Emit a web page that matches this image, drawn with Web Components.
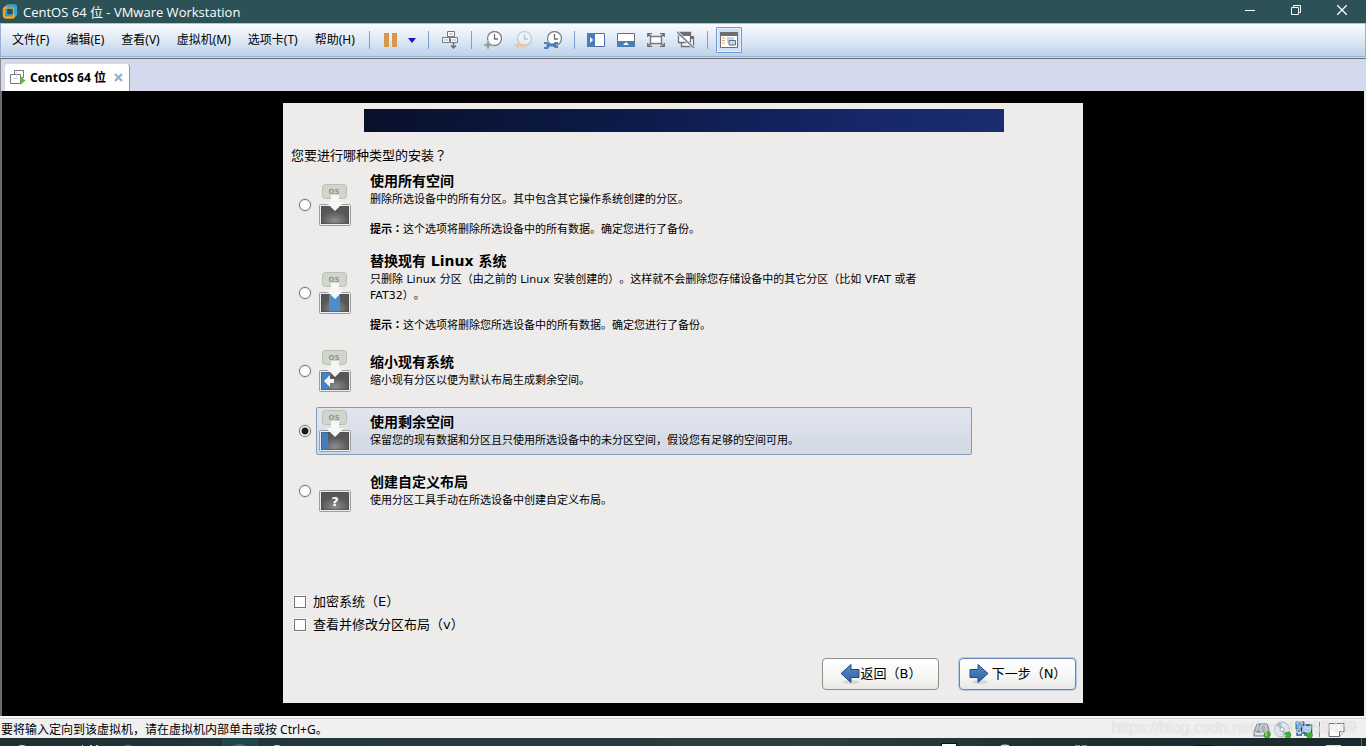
<!DOCTYPE html>
<html lang="zh-CN">
<head>
<meta charset="utf-8">
<title>CentOS 64 位 - VMware Workstation</title>
<style>
html, body { margin: 0; }
body { background: #000; font-family: "Noto Sans", "Noto Sans CJK SC", sans-serif; text-spacing-trim: space-all; }
</style>
</head>
<body>
<vm-workstation></vm-workstation>

<script>
const define = (name, css, html, setup) => {
  const tpl = document.createElement('template');
  tpl.innerHTML = `<style>*{box-sizing:border-box}${css}</style>${html}`;
  customElements.define(name, class extends HTMLElement {
    constructor() {
      super();
      this.attachShadow({ mode: 'open' }).append(tpl.content.cloneNode(true));
    }
    connectedCallback() { if (setup) setup(this, this.shadowRoot); }
  });
};

/* ---------- toolbar glyphs, all on an 18px grid ---------- */
const clock = '<circle cx="10.500" cy="7.500" r="7" fill="#fff" stroke="#808285" stroke-width="1.300"/><path d="M10.500 3V8H14" fill="none" stroke="#6d6e71" stroke-width="1.300"/>';
const GLYPHS = {
  pause: '<path d="M2 2h5v14H2zM10 2h5v14h-5z" fill="#d8954c"/>',
  send: '<g fill="#fff" stroke="#77787b"><path d="M6.500 .5h7v5h-7zM1.500 6.500h7v5h-7zM9.500 6.500h7v5h-7z"/></g><path d="M8 2h4v2H8zM3 8h4v2H3zM11 8h4v2h-4z" fill="#c8d6ea"/><path d="M12.500 12v5M10 14.500l2.500 2.500 2.500-2.500" fill="none" stroke="#6d6e71" stroke-width="1.500"/>',
  snap: clock + '<path d="M2.500 10h3v2.500H8v3H5.500V18h-3v-2.500H0v-3h2.500z" fill="#84a896" stroke="#e6edf6" stroke-width=".6"/>',
  revert: '<g opacity=".3">' + clock + '</g><path d="M5 11v2h8v3H5v2l-5-3.500z" fill="#e0c9b8"/>',
  manage: clock + '<path d="M0 11h3l2 1.500h4l2-1.500h3v2h-2v2h2v2h-3l-2-1.500H5.500L4 18H0v-2h2.500v-3H0z" fill="#4a7ebb"/>',
  side: '<path d="M.5 2.500h17v13H.5z" fill="#fff" stroke="#4a6f9f"/><path d="M0 2h8v14H0z" fill="#4a7ebb"/><path d="M3 6l3 3-3 3z" fill="#fff"/>',
  bottom: '<path d="M.5 2.500h17v13H.5z" fill="#fff" stroke="#6d6e71"/><path d="M0 10h18v6H0z" fill="#4a7ebb"/><path d="M6 14l3-3 3 3z" fill="#fff"/>',
  full: '<path d="M3.500 5.500h11v7h-11z" fill="#fff" stroke="#77787b" stroke-width="1.400"/><path d="M.7 6V2.700H5M.7 2.700L4 5.500M13 2.700h4.300V6M17.300 2.700L14 5.500M.7 12v3.300H5M.7 15.300L4 12.500M13 15.300h4.300V12M17.300 15.300L14 12.500" fill="none" stroke="#6d6e71" stroke-width="1.200"/>',
  unity: '<path d="M4.500 6.500h12v9h-12z" fill="#fff" stroke="#6d6e71" stroke-width="1.300"/><path d="M13 5h4v3h-4z" fill="#6d6e71"/><path d="M1.500 1.500h12v10h-12z" fill="#fff" stroke="#6d6e71" stroke-width="1.300"/><path d="M1 1h13v4H1z" fill="#6d6e71"/><path d="M0 1l17 16" stroke="#e9f0f8" stroke-width="3"/><path d="M0 1l17 16" stroke="#6d7a8c" stroke-width="1.300"/>',
  console: '<path d="M.5 1.500h17v15H.5z" fill="#fff" stroke="#6d6e71"/><path d="M0 1h18v4H0z" fill="#6d6e71"/><path d="M2 7h3M2 9.500h3M2 12h3" stroke="#e5a868"/><path d="M7 6h7v6H7z" fill="#c8d6ea"/><path d="M9 9.500h6.500V14H9z" fill="#c8d6ea" stroke="#5f7186"/>',
  machine: '<path d="M4.500 1.500h9v7h-9z" fill="#fff" stroke="#77787b"/><path d="M.5 5.500h10v9H.5z" fill="#fff" stroke="#77787b"/><path d="M6.500 3v5M3 9.500h5" stroke="#c8d6ea"/><path d="M10.500 7l5 4.500-5 4.500z" fill="#5fbf3f"/>',
  logo: '<rect x="4" y="1.500" width="10" height="10" rx="2" fill="none" stroke="#35a5cc" stroke-width="2.400"/><rect x="2" y="3.500" width="10" height="10" rx="2" fill="none" stroke="#f0a52c" stroke-width="2.400"/><path d="M5 2.500h8v8" fill="none" stroke="#35a5cc" stroke-width="2"/>',
  disk: '<path d="M4 3h10l3 8H1z" fill="#aab4bd" stroke="#6f7b85"/><path d="M1 11h16v4H1z" fill="#dde2e6" stroke="#6f7b85"/><circle cx="14" cy="14" r="3" fill="#3cb72c" stroke="#2b8a20" stroke-width=".6"/>',
  cd: '<circle cx="8" cy="8.500" r="7.500" fill="#dfe8ed" stroke="#a9b3bb"/><path d="M8 8.500L2 4a7 7 0 0 1 5-3zM8 8.500l6 4a7 7 0 0 1-5 3z" fill="#a6c0d1"/><circle cx="8" cy="8.500" r="2" fill="#fff" stroke="#9aa6b0"/><circle cx="14" cy="14" r="3" fill="#3cb72c" stroke="#2b8a20" stroke-width=".6"/>',
  net: '<path d="M1 1h8v7H1z" fill="#7fb1df" stroke="#2a5f9e"/><path d="M6.500 4h10v8h-10z" fill="#9fd0f5" stroke="#16457e" stroke-width="1.400"/><path d="M2 9v5h5M4 9v3M9 14h5" fill="none" stroke="#1f5ca0" stroke-width="1.500"/><circle cx="14.500" cy="14" r="3" fill="#3cb72c" stroke="#2b8a20" stroke-width=".6"/>',
  note: '<path d="M1 2.500h15v8l-4.500 5H1z" fill="#fff" stroke="#6d6e71"/><path d="M11.500 15.500v-5H16" fill="#eee" stroke="#6d6e71"/>'
};
define('vm-glyph', ':host{display:block;width:18px;height:18px;flex:none}svg{display:block}',
  '<svg width="18" height="18" viewBox="0 0 18 18" aria-hidden="true"></svg>',
  (el, root) => { root.querySelector('svg').innerHTML = GLYPHS[el.getAttribute('name')] || ''; });

/* ---------- window title bar ---------- */
define('title-bar', `
:host{display:flex;align-items:center;height:23px;flex:none;background:#2c5157;color:#fff;font:13px/18px "Open Sans","Noto Sans CJK SC",sans-serif;padding:0 1px 0 2px}
vm-glyph{margin-right:3px;margin-top:2px}
h1{margin:0;font:inherit;flex:1}
button{width:46px;height:20px;align-self:flex-start;padding:0;border:0;background:none;display:grid;place-items:center}
svg{display:block;fill:none;stroke:#fff}`, `
<vm-glyph name="logo"></vm-glyph><h1>CentOS 64 位 - VMware Workstation</h1>
<button aria-label="最小化"><svg width="10" height="10"><path d="M0 5.500h10"/></svg></button>
<button aria-label="还原"><svg width="10" height="10"><path d="M.5 2.500h7v7h-7zM2.500 2V.5h7v7H8"/></svg></button>
<button aria-label="关闭"><svg width="10" height="10"><path d="M0 0l10 10M10 0L0 10" stroke-width="1.300"/></svg></button>`);

/* ---------- menus and tools ---------- */
define('menu-bar', `
:host{display:flex;align-items:center;height:34px;flex:none;border:1px solid #93b4d8;border-top-color:#a9c6de;background:linear-gradient(#f9fbfe,#dfe9f5 50%,#bdd1e8);font-size:12px;color:#000}
nav{display:flex;gap:17px;padding-left:11px;width:368px;flex:none}
button{font:inherit;color:inherit;line-height:18px;border:0;background:none;padding:0;white-space:nowrap}
.tools{display:flex;align-items:center;gap:12px}
.sep{width:1px;height:18px;background:#7ba0cf}
.power{display:flex;align-items:center;gap:8px}
.on{border:1px solid #6f9bd1;background:#cfe0f7;box-shadow:inset 0 0 0 1px #e6effb;padding:3px;margin:0 -4px;border-radius:1px}`, `
<nav><button>文件(F)</button><button>编辑(E)</button><button>查看(V)</button><button>虚拟机(M)</button><button>选项卡(T)</button><button>帮助(H)</button></nav>
<div class="tools">
<i class="sep"></i><div class="power"><button aria-label="挂起"><vm-glyph name="pause"></vm-glyph></button><button aria-label="电源选项"><svg width="8" height="5" style="display:block"><path d="M0 0h8L4 5z" fill="#1414c8"/></svg></button></div>
<i class="sep"></i><button aria-label="发送按键"><vm-glyph name="send"></vm-glyph></button>
<i class="sep"></i><button aria-label="拍摄快照"><vm-glyph name="snap"></vm-glyph></button><button aria-label="恢复快照"><vm-glyph name="revert"></vm-glyph></button><button aria-label="管理快照"><vm-glyph name="manage"></vm-glyph></button>
<i class="sep"></i><button aria-label="显示库"><vm-glyph name="side"></vm-glyph></button><button aria-label="缩略图栏"><vm-glyph name="bottom"></vm-glyph></button><button aria-label="全屏"><vm-glyph name="full"></vm-glyph></button><button aria-label="Unity"><vm-glyph name="unity"></vm-glyph></button>
<i class="sep"></i><button class="on" aria-label="控制台视图"><vm-glyph name="console"></vm-glyph></button>
</div>`);

/* ---------- tabs ---------- */
define('tab-strip', `
:host{display:flex;align-items:flex-end;height:34px;flex:none;background:#d4d9ed;border-top:1px solid #d9dbe2;box-shadow:inset 0 1px #6b6b6b;padding-left:4px;border-left:1px solid #8c8c8c}
.tab{display:flex;align-items:center;height:27px;background:#fff;border-right:1px solid #7f9db9;border-radius:3px 3px 0 0;padding:0 6px 0 5px;font-size:12px;font-weight:bold;line-height:16px}
vm-glyph{margin:1px 2px 0 0}
.tab span{white-space:nowrap}
button{border:0;background:none;padding:0;margin-left:8px}
svg{display:block}`, `
<div class="tab"><vm-glyph name="machine"></vm-glyph><span>CentOS 64 位</span><button aria-label="关闭选项卡"><svg width="9" height="9"><path d="M1 1l7 7M8 1L1 8" stroke="#8fb0cf" stroke-width="2.200"/></svg></button></div>`);

/* ---------- partition pictures ---------- */
const osPart = '<rect x="4.500" y="1.500" width="24" height="14" rx="3" fill="#d1d6cd" stroke="#b9beb5"/><text x="16" y="11" text-anchor="middle" font-family="DejaVu Sans" font-weight="bold" font-size="7" fill="#92978f">OS</text>';
const arrow = '<path d="M13 12h8v7h5l-9 9-9-9h5z" fill="#f6f6f5"/>';
const PARTS = {
  all: [osPart, '', arrow],
  replace: [osPart, '<path d="M11 23h11v18H11z" fill="#4f8ccb"/>', arrow],
  shrink: [osPart, '<path d="M3 23h9v18H3z" fill="#4583c6"/>', arrow + '<path d="M6 32l6-6v4h4v4h-4v4z" fill="#f6f6f5"/>'],
  free: [osPart, '<path d="M3 23h7v18H3z" fill="#3f7fc4"/>', arrow],
  custom: ['', '', '<text x="17" y="37" text-anchor="middle" font-family="DejaVu Sans" font-weight="bold" font-size="13" fill="#fff">?</text>']
};
define('partition-icon', ':host{display:block;width:34px;height:44px;flex:none}svg{display:block}',
  '<svg width="34" height="44" viewBox="0 0 34 44" aria-hidden="true"></svg>',
  (el, root) => {
    const [top, part, over] = PARTS[el.getAttribute('kind')];
    root.querySelector('svg').innerHTML = `<defs><radialGradient id="g" cy=".8"><stop offset="0" stop-color="#8d8d8d"/><stop offset="1" stop-color="#575757"/></radialGradient></defs>${top}<rect x="1.500" y="21.500" width="31" height="21" rx="1" fill="#eee" stroke="#9d9d9d"/><path d="M3 23h28v18H3z" fill="url(#g)"/>${part}<path d="M3.500 23.500h27v17h-27z" fill="none" stroke="#444" stroke-opacity=".4"/>${over}`;
  });

/* ---------- wizard buttons ---------- */
define('wizard-button', `
:host{display:block}
button{display:flex;align-items:center;justify-content:center;gap:1px;min-width:117px;height:32px;padding:0 8px;border:1px solid #8f8f8c;border-radius:4px;background:linear-gradient(#fff,#f8f8f7 50%,#e9e8e6);font:13px/18px "DejaVu Sans","Noto Sans CJK SC",sans-serif;color:#000;white-space:nowrap}
:host([primary]) button{border-color:#6688b8;box-shadow:0 0 0 1px #b7cae4;gap:3px}
:host([primary]) svg path{transform:scaleX(-1);transform-origin:10px 10px}
svg{display:block;flex:none}`, `
<button><svg width="20" height="22"><defs><linearGradient id="b" x2="0" y2="1"><stop stop-color="#5b8ac4"/><stop offset="1" stop-color="#2f62a6"/></linearGradient></defs><ellipse cx="11" cy="19" rx="8" ry="2" fill="#000" opacity=".1"/><path d="M1 10.500l10-9v5h8v8h-8v5z" fill="url(#b)" stroke="#204a87"/></svg><slot></slot></button>`);

/* ---------- guest installer ---------- */
const options = [
  ['all', '使用所有空间', '删除所选设备中的所有分区。其中包含其它操作系统创建的分区。', '这个选项将删除所选设备中的所有数据。确定您进行了备份。'],
  ['replace', '替换现有 Linux 系统', '只删除 Linux 分区（由之前的 Linux 安装创建的）。这样就不会删除您存储设备中的其它分区（比如 VFAT 或者 FAT32）。', '这个选项将删除您所选设备中的所有数据。确定您进行了备份。'],
  ['shrink', '缩小现有系统', '缩小现有分区以便为默认布局生成剩余空间。'],
  ['free', '使用剩余空间', '保留您的现有数据和分区且只使用所选设备中的未分区空间，假设您有足够的空间可用。'],
  ['custom', '创建自定义布局', '使用分区工具手动在所选设备中创建自定义布局。']
];
define('centos-installer', `
:host{display:flex;flex-direction:column;width:100%;max-width:800px;background:#edeceb;color:#000;font:13px/18px "DejaVu Sans","Noto Sans CJK SC",sans-serif;padding:6px 7px 13px 8px}
.banner{width:100%;max-width:640px;height:23px;flex:none;align-self:center;background:linear-gradient(100deg,#08112b,#0c1a48 40%,#17276a 80%,#1a2d6e)}
h2{font:inherit;margin:15px 0 6px}
.mid{font-family:"DejaVu Sans","Noto Sans CJK TC",sans-serif}
form{display:flex;flex-direction:column;flex:1}
.list{display:flex;flex-direction:column;gap:12px;max-width:681px}
.option{display:grid;grid-template-columns:25px 1fr;align-items:center}
.box{display:flex;align-items:center;gap:18px;min-height:48px;padding:0 1px;border:1px solid transparent;border-radius:2px}
.text{display:block;max-width:556px;font-size:11px;line-height:16px}
.text strong{display:block;font-size:14px;line-height:18px;margin-bottom:2px}
.text > span{display:block}
.text .hint{margin-top:14px}
.option:has(:checked) .box{border-color:#849bbb;background:linear-gradient(#e1e5ee,#d2d9e3)}
input{appearance:none;margin:0;background:#fff;border:1px solid #767673;display:block;flex:none}
[type=radio]{width:12px;height:12px;border-radius:50%;margin-left:8px;box-shadow:0 0 0 1px #dddcda}
[type=radio]:checked{background:radial-gradient(circle,#1a1a1a 3px,#fff 4px)}
[type=checkbox]{width:12px;height:12px;box-shadow:0 0 0 1px #f6f6f5}
[type=checkbox]:checked{background:#444}
.checks{display:flex;flex-direction:column;gap:5px;margin:auto 0 24px 3px}
.checks label{display:flex;align-items:center;gap:7px}
.actions{display:flex;justify-content:flex-end;gap:20px}`, `
<div class="banner"></div>
<h2>您要进行哪种类型的安装<span class="mid" lang="zh-TW">？</span></h2>
<form>
<div class="list">${options.map(([kind, title, text, hint]) => `
<label class="option"><input type="radio" name="layout" value="${kind}"${kind === 'free' ? ' checked' : ''}><span class="box"><partition-icon kind="${kind}"></partition-icon><span class="text"><strong>${title}</strong><span>${text}</span>${hint ? `<span class="hint"><b class="mid" lang="zh-TW">提示：</b>${hint}</span>` : ''}</span></span></label>`).join('')}
</div>
<div class="checks"><label><input type="checkbox" name="encrypt">加密系统（E）</label><label><input type="checkbox" name="review">查看并修改分区布局（v）</label></div>
<div class="actions"><wizard-button>返回（B）</wizard-button><wizard-button primary>下一步（N）</wizard-button></div>
</form>`);

/* ---------- status bar and the edge of the desktop taskbar ---------- */
define('status-bar', `
:host{display:flex;align-items:center;position:relative;height:22px;flex:none;background:#f0f0f0;border-top:1px solid #fff;box-shadow:inset 0 1px #f0f0f0,inset 0 2px #d4d4d4;font-size:12px;line-height:18px;padding:4px 20px 0 1px;color:#000}
p{margin:0;flex:1;white-space:nowrap}
.devices{display:flex;gap:3px;align-items:center}
.sep{width:1px;height:15px;background:#8c8c8c;margin:0 5px 0 3px}
.mark{position:absolute;right:9px;top:1px;font:16px/20px "Liberation Sans",sans-serif;color:rgba(255,255,255,.6);text-shadow:0 0 1px rgba(0,0,0,.18);white-space:nowrap}`, `
<p>要将输入定向到该虚拟机，请在虚拟机内部单击或按 Ctrl+G。</p>
<div class="devices"><vm-glyph name="disk"></vm-glyph><vm-glyph name="cd"></vm-glyph><vm-glyph name="net"></vm-glyph><i class="sep"></i><vm-glyph name="note"></vm-glyph></div>
<span class="mark">https://blog.csdn.net/qq_42959469</span>`);
define('task-edge', ':host{display:block;height:8px;flex:none;background:linear-gradient(90deg,#1c2f31,#24393d 25%,#2e3c3f 60%,#1b2e30 80%,#182a2d)}svg{display:block}', `
<svg width="100%" height="8" aria-hidden="true"><path d="M222 0h36v8h-36z" fill="#1f474c"/><g fill="#d6dadb"><path d="M18 8q4-2 8 0zM82 7h1v1h-1zM90 7h2v1h-2zM96 7h2v1h-2zM273 8q4-2 8 0zM1001 7q4-1 8 0v1h-8zM1326 7h15v1h-15z"/></g><path d="M123 8q5-3 10 0zM232 8q8-4 15 0z" fill="#2470a0"/><path d="M941 5h16v3h-16z" fill="#111"/><path d="M942 6h14v2h-14z" fill="#fff"/><path d="M1075 7h5v1h-5zM1082 7h5v1h-5z" fill="#8b9495"/><path d="M1197 7h16v1h-16z" fill="#0b1516"/><path d="M1361 0h1v8h-1z" fill="#5e6c6e"/></svg>`);

define('vm-workstation', `
:host{display:flex;flex-direction:column;min-height:100vh}
main{flex:1;display:flex;justify-content:center;background:#000;border-left:2px solid #6b6b6b;border-right:2px solid #ebebeb;padding:12px 0 13px}`, `
<title-bar></title-bar><menu-bar></menu-bar><tab-strip></tab-strip>
<main><centos-installer></centos-installer></main>
<status-bar></status-bar><task-edge></task-edge>`);
</script>
</body>
</html>
